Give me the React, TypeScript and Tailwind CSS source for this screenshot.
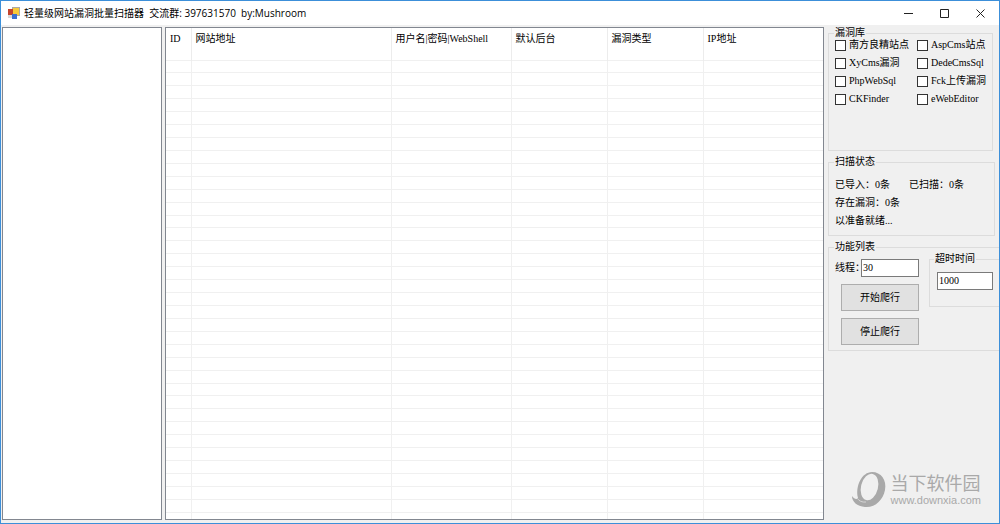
import { useState } from "react";

const columns = [
  { title: "ID", width: "w-[25px]" },
  { title: "网站地址", width: "w-[200px]" },
  { title: "用户名|密码|WebShell", width: "w-[120px]" },
  { title: "默认后台", width: "w-24" },
  { title: "漏洞类型", width: "w-24" },
  { title: "IP地址", width: "w-auto" },
];

const vulns = [
  "南方良精站点",
  "AspCms站点",
  "XyCms漏洞",
  "DedeCmsSql",
  "PhpWebSql",
  "Fck上传漏洞",
  "CKFinder",
  "eWebEditor",
];

const rows = Array.from({ length: 36 }, (_, i) => i);

const groupBox = "min-w-0 border border-[#dcdcdc] pl-1.5";
const legend = "-ml-px h-3 px-px";
const textBox = "border border-[#7a7a7a] bg-white px-px pb-0.5 outline-none";
const pushButton =
  "h-[27px] w-[78px] border border-[#adadad] bg-[#e1e1e1] hover:border-[#0078d7]";

function AppIcon() {
  return (
    <svg width="12" height="12" viewBox="0 0 12 12">
      <rect x="4" y="0" width="8" height="9" fill="#a8a8a8" />
      <rect x="5" y="1" width="6" height="7" fill="#f7c93a" />
      <rect x="0" y="2" width="5" height="6" fill="#c4452d" />
      <rect x="0" y="8" width="4" height="3" fill="#d9d9d9" />
      <rect x="4" y="7" width="5" height="5" fill="#3b6fd0" />
    </svg>
  );
}

function TitleBar() {
  return (
    <header className="flex h-6 shrink-0 items-center bg-white pr-px pl-[7px] font-['Open_Sans','Noto_Sans_CJK_SC',sans-serif]">
      <AppIcon />
      <h1 className="ml-1 flex-1 whitespace-pre">
        轻量级网站漏洞批量扫描器  交流群: 397631570  by:Mushroom
      </h1>
      <button aria-label="最小化" className="flex h-6 w-9 items-center justify-center">
        <svg width="9" height="9" viewBox="0 0 9 9" stroke="#222">
          <path d="M0 4.5h9" />
        </svg>
      </button>
      <button aria-label="最大化" className="flex h-6 w-9 items-center justify-center">
        <svg width="9" height="9" viewBox="0 0 9 9" stroke="#222" fill="none">
          <path d="M.5 .5h8v8h-8z" />
        </svg>
      </button>
      <button aria-label="关闭" className="flex h-6 w-9 items-center justify-center">
        <svg width="9" height="9" viewBox="0 0 9 9" stroke="#222">
          <path d="M.5 .5l8 8M8.5 .5l-8 8" />
        </svg>
      </button>
    </header>
  );
}

function ResultTable() {
  return (
    <div className="min-w-0 flex-1 border border-[#828790] bg-white">
      <table className="h-full w-full table-fixed border-collapse">
        <thead>
          <tr className="h-8 border-b border-[#f0f0f0]">
            {columns.map((col) => (
              <th
                key={col.title}
                className={`${col.width} overflow-hidden border-r border-[#ececec] px-1 pb-2.5 text-left font-normal whitespace-nowrap last:border-r-0`}
              >
                {col.title}
              </th>
            ))}
          </tr>
        </thead>
        <tbody>
          {rows.map((row) => (
            <tr key={row} className="border-b border-[#f0f0f0] last:border-b-0">
              {columns.map((col) => (
                <td key={col.title} className="border-r border-[#f0f0f0] last:border-r-0" />
              ))}
            </tr>
          ))}
        </tbody>
      </table>
    </div>
  );
}

function Watermark() {
  return (
    <div className="absolute right-[18px] bottom-3.5 flex items-center gap-1 text-[#a9a9a9]">
      <svg width="36" height="38" viewBox="0 0 36 38">
        <path
          fill="currentColor"
          d="M21 1C30 1 36 9 34 19C32 29 24 37 14 36C6 35 1 31 1 25C3 28 6 29 7 27C4 15 11 1 21 1Z"
        />
        <ellipse cx="18.5" cy="16" rx="8.5" ry="13.5" transform="rotate(14 18.5 16)" fill="#f0f0f0" />
        <path d="M6.500 27.500C8 30 11 31.500 15 31" fill="none" stroke="#d4d4d4" />
      </svg>
      <div className="font-['Liberation_Sans','Noto_Sans_CJK_SC',sans-serif]">
        <p className="text-[18px] leading-5">当下软件园</p>
        <p className="text-[11px] leading-3">www.downxia.com</p>
      </div>
    </div>
  );
}

export default function App() {
  const [checked, setChecked] = useState<string[]>([]);
  const [threads, setThreads] = useState("30");
  const [timeout, setTimeoutValue] = useState("1000");

  const toggle = (name: string) => {
    setChecked((el) =>
      el.includes(name) ? el.filter((n) => n !== name) : [...el, name],
    );
  };

  return (
    <div className="relative flex h-screen flex-col overflow-hidden border border-[#3c8fd9] bg-[#f0f0f0] font-['Liberation_Serif','Noto_Sans_CJK_SC',serif] text-[10px] leading-3 text-black">
      <TitleBar />

      <main className="flex min-h-0 flex-1 pt-0.5 pb-[3px] pl-px">
        {/* SITE LIST */}
        <div className="mr-[3px] w-40 shrink-0 border border-[#828790] bg-white" />

        <ResultTable />

        {/* SIDE PANEL */}
        <aside className="ml-1 flex w-[171px] shrink-0 flex-col gap-[5px]">
          <fieldset className={`${groupBox} mr-1.5 h-[124px]`}>
            <legend className={legend}>漏洞库</legend>
            <div className="grid grid-cols-[82px_1fr] gap-y-1.5">
              {vulns.map((name) => (
                <label key={name} className="flex h-3 items-center gap-[3px] whitespace-nowrap">
                  <input
                    type="checkbox"
                    checked={checked.includes(name)}
                    onChange={() => toggle(name)}
                    className="size-[11px] shrink-0 appearance-none border border-[#333] bg-white checked:bg-[#333]"
                  />
                  {name}
                </label>
              ))}
            </div>
          </fieldset>

          <fieldset className={`${groupBox} mr-1 h-20`}>
            <legend className={legend}>扫描状态</legend>
            <div className="flex flex-col gap-1.5 pt-[11px]">
              <p className="flex gap-[19px]">
                <span>已导入：0条</span>
                <span>已扫描：0条</span>
              </p>
              <p>存在漏洞：0条</p>
              <p>以准备就绪...</p>
            </div>
          </fieldset>

          <fieldset className={`${groupBox} border-r-0`}>
            <legend className={legend}>功能列表</legend>
            <div className="flex items-start justify-between">
              <div className="flex flex-col items-end gap-[7px] pt-1.5 pb-[5px]">
                <label className="flex items-center">
                  <span className="w-[26px] whitespace-nowrap">线程：</span>
                  <input
                    value={threads}
                    onChange={(e) => setThreads(e.target.value)}
                    className={`${textBox} relative h-[18px] w-[58px]`}
                  />
                </label>
                <button className={pushButton}>开始爬行</button>
                <button className={pushButton}>停止爬行</button>
              </div>
              <fieldset className="h-[54px] w-[70px] border border-r-0 border-[#dcdcdc] pl-1">
                <legend className="h-3 px-px">超时时间</legend>
                <input
                  aria-label="超时时间"
                  value={timeout}
                  onChange={(e) => setTimeoutValue(e.target.value)}
                  className={`${textBox} mt-[7px] ml-[3px] h-[18px] w-14`}
                />
              </fieldset>
            </div>
          </fieldset>
        </aside>
      </main>

      <Watermark />
    </div>
  );
}
